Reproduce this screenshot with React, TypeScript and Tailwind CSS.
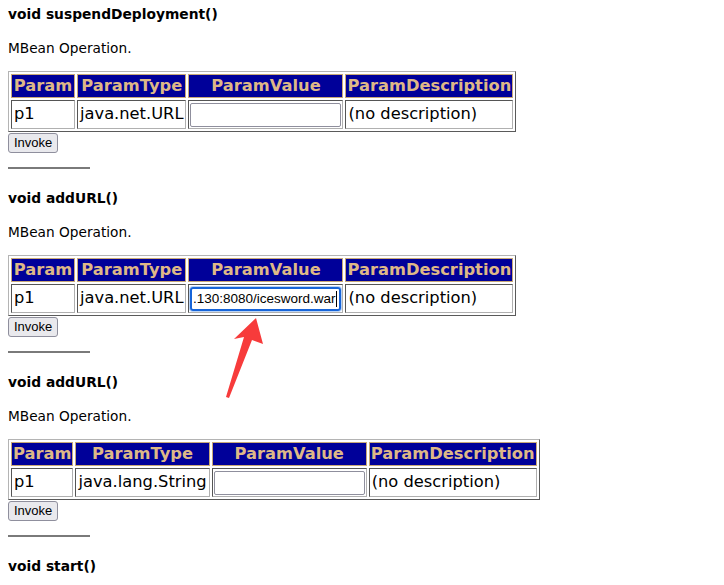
import React from "react";

type Op = {
  name: string;
  type: string;
  value?: string;
  widths: number[];
};

const ops: Op[] = [
  { name: "void suspendDeployment()", type: "java.net.URL", widths: [64, 109, 155, 167] },
  { name: "void addURL()", type: "java.net.URL", value: ".130:8080/icesword.war", widths: [64, 109, 155, 167] },
  { name: "void addURL()", type: "java.lang.String", widths: [62, 134, 154, 168] },
];

const heads = ["Param", "ParamType", "ParamValue", "ParamDescription"];

function ValueInput({ value }: { value?: string }) {
  if (value) {
    return (
      <div className="h-[24px] w-[151px] rounded-[3px] border-2 border-[#1664d9] shadow-[0_0_0_1px_#b9d3f5] flex items-center justify-end overflow-hidden whitespace-nowrap pr-[2px] text-[13.5px] leading-[18px] font-['Liberation_Sans',Arial,sans-serif] text-black">
        <span>{value}</span>
        <span className="ml-[1px] inline-block w-[1px] h-[16px] bg-black" />
      </div>
    );
  }
  return <div className="h-[24px] w-[151px] rounded-[2px] border border-[#8f8f9d] bg-white" />;
}

const cell =
  "h-[29px] py-0 border border-t-[#555] border-l-[#555] border-b-[#b0b0b0] border-r-[#b0b0b0] whitespace-nowrap";

function Section({ op }: { op: Op }) {
  return (
    <div>
      <h3 className="h-[18px] leading-[18px] text-[13.8px] font-bold">{op.name}</h3>
      <p className="mt-[16px] h-[18px] leading-[18px] text-[13.7px]">MBean Operation.</p>
      <table className="mt-[14px] border-separate border-spacing-[2px] border border-t-[#b4b4b4] border-l-[#b4b4b4] border-b-[#5a5a5a] border-r-[#5a5a5a] text-[16.3px]">
        <thead>
          <tr>
            {heads.map((h, i) => (
              <th
                key={h}
                style={{ width: op.widths[i] }}
                className="h-[24px] p-0 px-[1px] leading-[20px] bg-[#000099] text-[#deb887] font-bold border border-[#c8a878] text-center whitespace-nowrap"
              >
                {h}
              </th>
            ))}
          </tr>
        </thead>
        <tbody>
          <tr>
            <td className={`${cell} px-[2px]`}>p1</td>
            <td className={`${cell} px-[2px]`}>{op.type}</td>
            <td className={`${cell} px-[1px]`}>
              <ValueInput value={op.value} />
            </td>
            <td className={`${cell} px-[2px]`}>(no description)</td>
          </tr>
        </tbody>
      </table>
      <button className="block mt-[1px] h-[20px] px-[5px] rounded-[3px] border border-[#8f8f9d] bg-[#e9e9ed] text-[13px] leading-[18px] font-['Liberation_Sans',Arial,sans-serif] text-black">
        Invoke
      </button>
      <div className="mt-[14px] w-[82px] h-[2px] bg-[#7a7a7a]" />
      <div className="h-[20px]" />
    </div>
  );
}

export default function App() {
  return (
    <div className="relative min-h-[585px] bg-white text-black font-['DejaVu_Sans',Verdana,sans-serif] px-[8px] pt-[5px] overflow-hidden">
      {ops.map((op, i) => (
        <Section key={i} op={op} />
      ))}
      <h3 className="h-[18px] leading-[18px] text-[13.8px] font-bold">void start()</h3>

      {/* red arrow */}
      <svg className="absolute left-0 top-0 pointer-events-none" width="724" height="585">
        <polygon
          points="256,318 263,344 252,340 229,398 226,397 244,337 234,339"
          fill="#f73b3b"
        />
      </svg>
    </div>
  );
}
